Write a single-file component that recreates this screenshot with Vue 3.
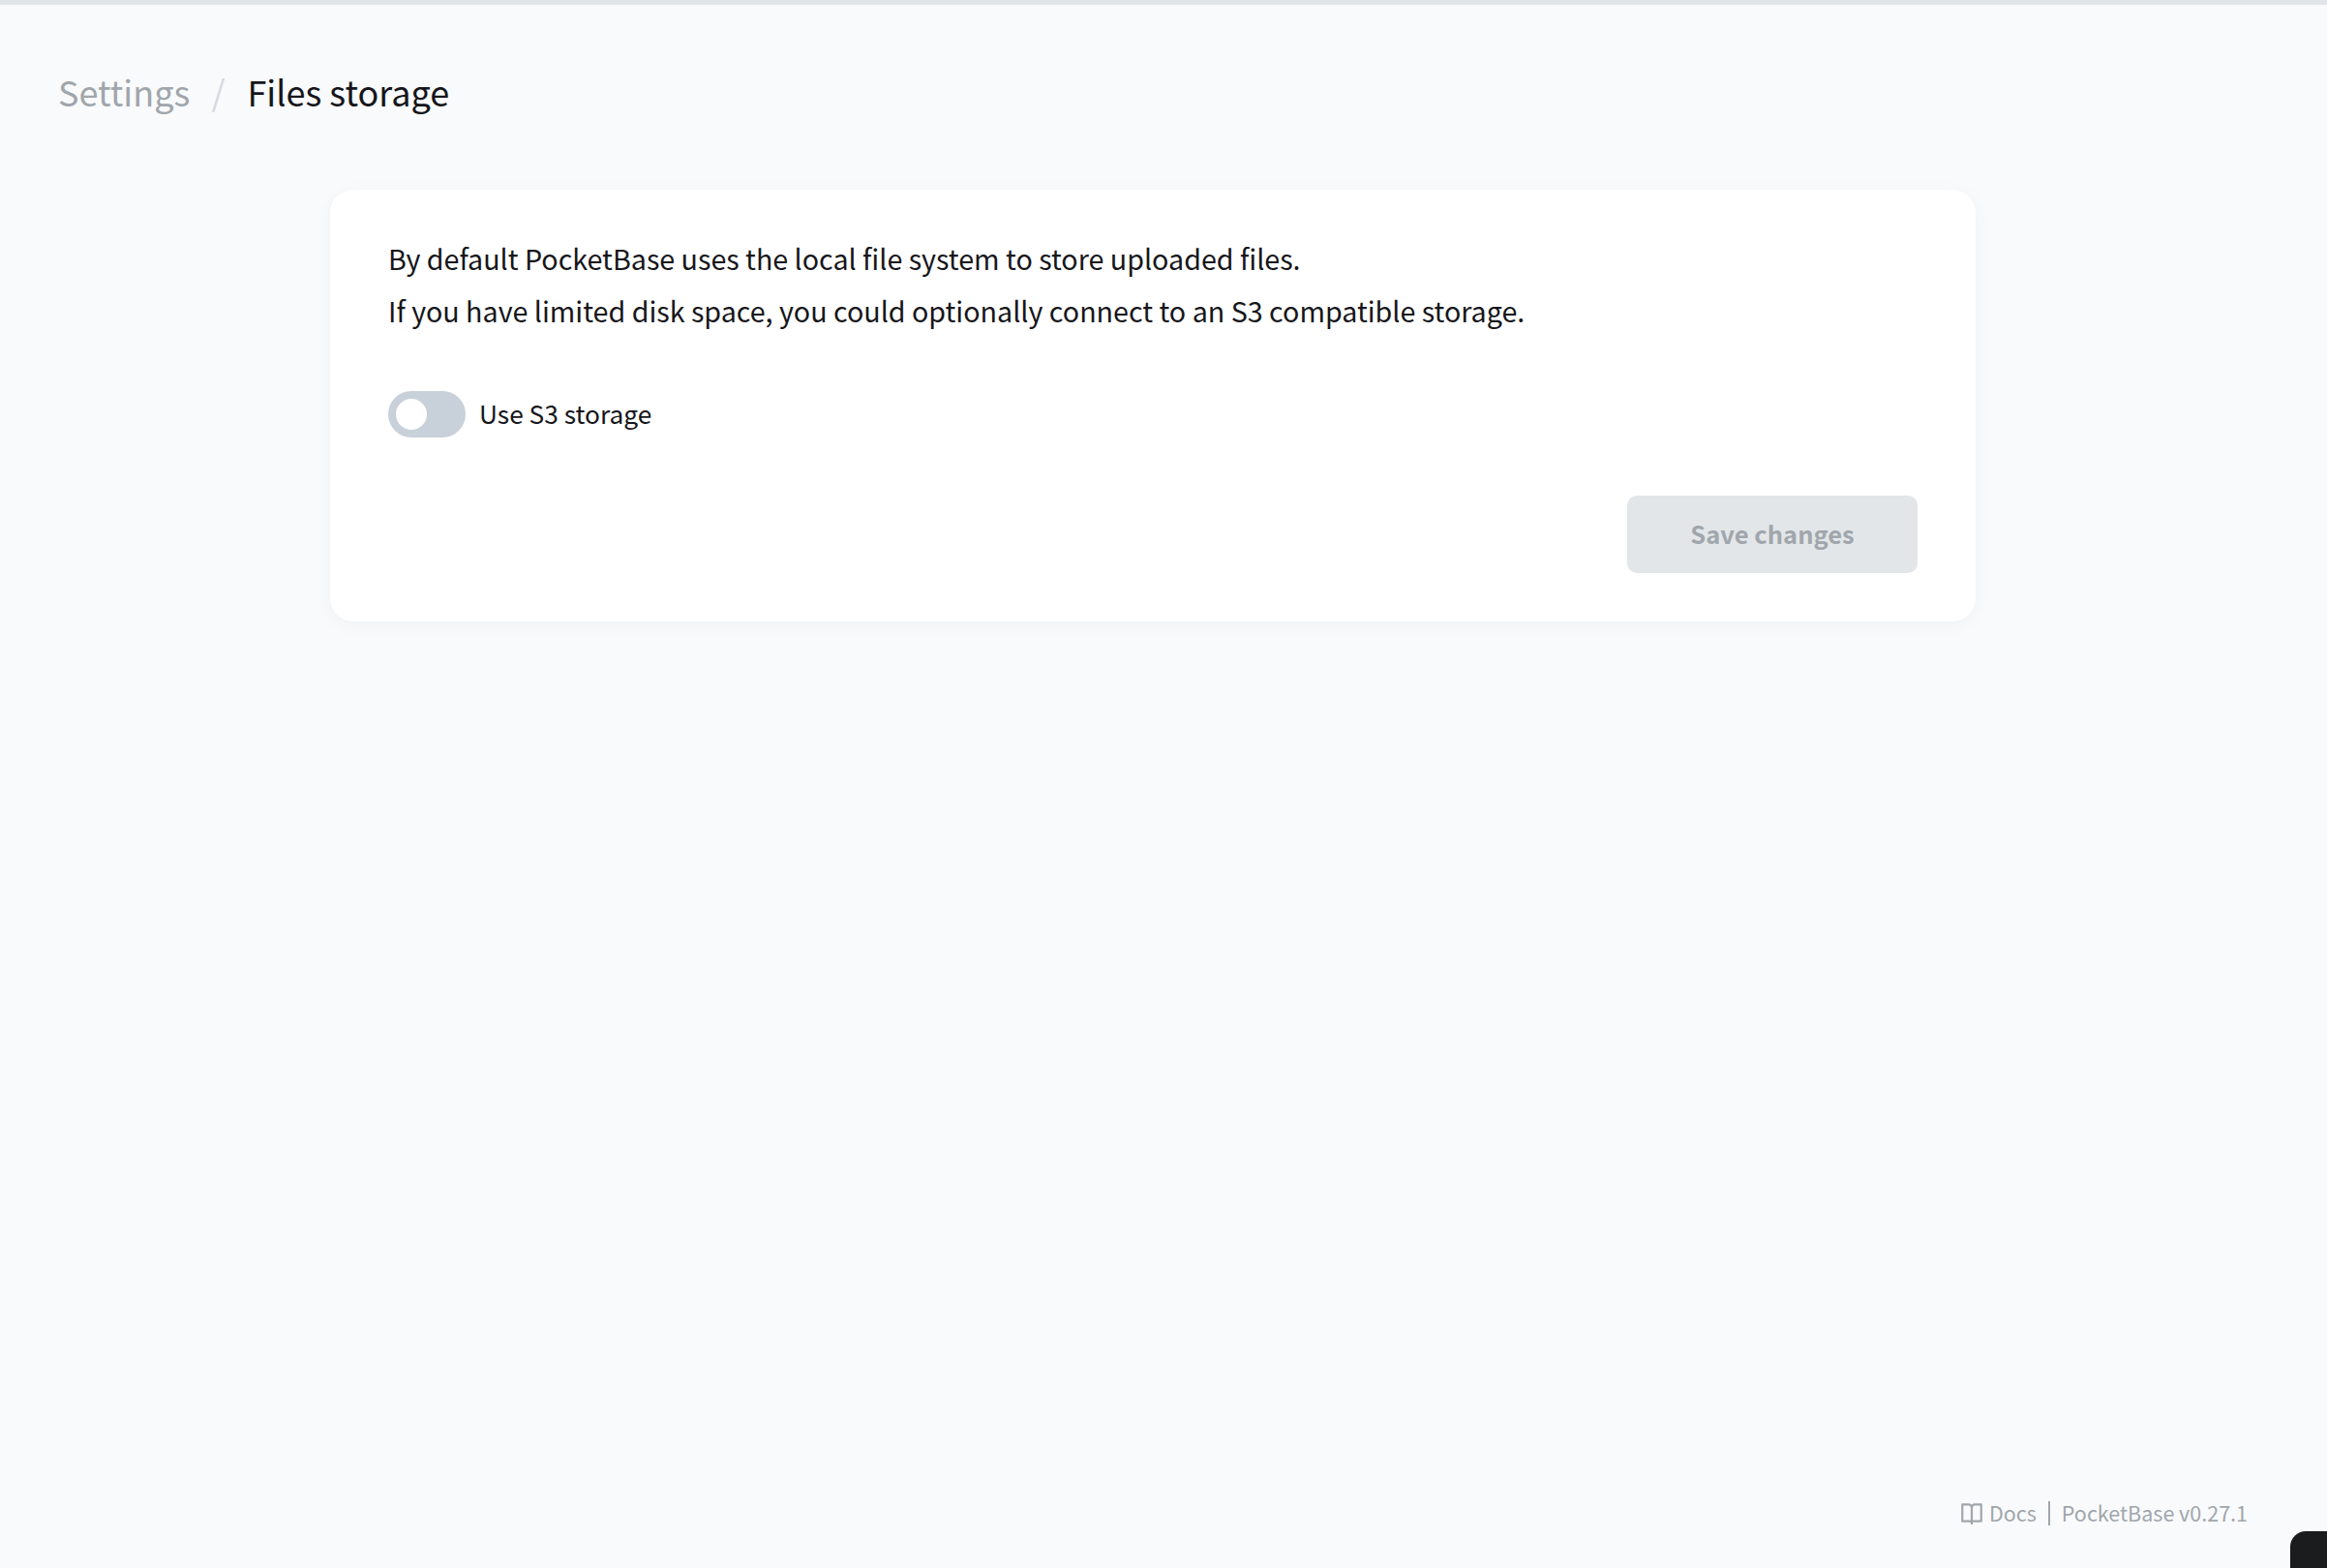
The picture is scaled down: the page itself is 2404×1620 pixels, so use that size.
<template>
	<div class="page">
		<div class="top-line"></div>
		<header class="breadcrumbs">
			<span class="crumb muted">Settings</span>
			<span class="sep">/</span>
			<span class="crumb">Files storage</span>
		</header>

		<section class="panel">
			<p class="intro">By default PocketBase uses the local file system to store uploaded files.</p>
			<p class="intro">If you have limited disk space, you could optionally connect to an S3 compatible storage.</p>

			<label class="toggle-row">
				<span class="toggle"><span class="knob"></span></span>
				<span class="toggle-label">Use S3 storage</span>
			</label>

			<div class="actions">
				<button class="save-btn" disabled>Save changes</button>
			</div>
		</section>

		<footer class="footer">
			<svg class="book" viewBox="0 0 24 24" fill="currentColor">
				<path d="M13 21V23H11V21H3C2.44772 21 2 20.5523 2 20V4C2 3.44772 2.44772 3 3 3H9C10.1947 3 11.2671 3.52375 12 4.35418C12.7329 3.52375 13.8053 3 15 3H21C21.5523 3 22 3.44772 22 4V20C22 20.5523 21.5523 21 21 21H13ZM20 19V5H15C13.8954 5 13 5.89543 13 7V19H20ZM11 19V7C11 5.89543 10.1046 5 9 5H4V19H11Z" />
			</svg>
			<span class="docs">Docs</span>
			<span class="divider"></span>
			<span>PocketBase v0.27.1</span>
		</footer>

		<div class="corner"></div>
	</div>
</template>

<script setup>
</script>

<style>
	html, body {
		margin: 0;
		background: #f9fafc;
	}
</style>

<style scoped>
	.page {
		position: relative;
		display: flex;
		flex-direction: column;
		width: 2404px;
		height: 1620px;
		overflow: hidden;
		box-sizing: border-box;
		padding: 0 82px 0 60px;
		background: #f9fafc;
		color: #16161a;
		font-family: "Noto Sans CJK SC", "Noto Sans", sans-serif;
	}

	.top-line {
		height: 5px;
		margin: 0 -82px 0 -60px;
		background: #e1e5ea;
	}

	.breadcrumbs {
		display: flex;
		align-items: center;
		height: 60px;
		margin-top: 59px;
		font-size: 36px;
		line-height: 60px;
	}

	.muted {
		color: #a0a6ab;
	}

	.sep {
		margin: 0 23px 0 22px;
		color: #d5d9dd;
	}

	.panel {
		display: flex;
		flex-direction: column;
		width: 1700px;
		box-sizing: border-box;
		margin: 72px auto 0;
		padding: 44px 60px 50px 60px;
		background: #fff;
		border-radius: 24px;
		box-shadow: 0 3px 18px rgba(22, 22, 26, 0.04);
	}

	.intro {
		margin: 0;
		font-size: 28.66px;
		line-height: 54px;
	}

	.toggle-row {
		display: flex;
		align-items: center;
		gap: 14px;
		margin-top: 56px;
	}

	.toggle {
		display: flex;
		align-items: center;
		width: 80px;
		height: 48px;
		box-sizing: border-box;
		padding-left: 8px;
		border-radius: 24px;
		background: #c8d0da;
	}

	.knob {
		width: 32px;
		height: 32px;
		border-radius: 50%;
		background: #fff;
	}

	.toggle-label {
		margin-bottom: 3px;
		font-size: 26.3px;
		line-height: 44px;
	}

	.actions {
		display: flex;
		justify-content: flex-end;
		margin-top: 60px;
	}

	.save-btn {
		width: 300px;
		height: 80px;
		padding: 0 0 4px;
		border: 0;
		border-radius: 10px;
		background: #e3e6e9;
		color: #a0a6ac;
		font-family: inherit;
		font-size: 25.5px;
		font-weight: 700;
	}

	.footer {
		display: flex;
		align-items: center;
		justify-content: flex-end;
		margin-top: auto;
		margin-bottom: 39px;
		color: #a0a6ab;
		font-size: 21.5px;
		line-height: 36px;
	}

	.book {
		width: 26px;
		height: 26px;
		margin-right: 5px;
	}

	.divider {
		width: 2px;
		height: 25px;
		margin: 0 12px;
		background: #a0a6ab;
	}

	.corner {
		position: absolute;
		left: 2366px;
		top: 1582px;
		width: 80px;
		height: 80px;
		border-radius: 16px;
		background: #1a1c1e;
	}
</style>
